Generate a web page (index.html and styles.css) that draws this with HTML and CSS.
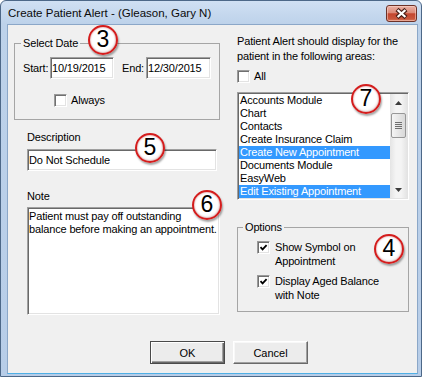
FILE: index.html
```html
<!DOCTYPE html>
<html lang="en">
<head>
    <meta charset="UTF-8">
    <meta name="viewport" content="width=device-width, initial-scale=1.0">
    <title>Create Patient Alert</title>
    <link rel="stylesheet" href="styles.css">
</head>
<body>
    <div class="window">
        <div class="titlebar">
            <span class="title">Create Patient Alert - (Gleason, Gary N)</span>
            <div class="close-btn">
                <svg width="31" height="17" viewBox="0 0 31 17">
                    <path d="M11 4.5 L20 12.5 M20 4.5 L11 12.5" stroke="#4b2019" stroke-width="4.4" fill="none"/>
                    <path d="M11.6 5 L19.4 12 M19.4 5 L11.6 12" stroke="#fff" stroke-width="2.2" fill="none"/>
                </svg>
            </div>
        </div>

        <div class="client">
            <div class="columns">
                <div class="left">
                    <fieldset class="group date-group">
                        <legend>Select Date</legend>
                        <div class="date-row">
                            <span class="start-label">Start:</span>
                            <div class="field date start">10/19/2015</div>
                            <span class="end-label">End:</span>
                            <div class="field date end">12/30/2015</div>
                        </div>
                        <div class="check always"><span class="box"></span>Always</div>
                    </fieldset>

                    <div class="caption desc-caption">Description</div>
                    <div class="field desc">Do Not Schedule</div>

                    <div class="caption note-caption">Note</div>
                    <div class="field note">Patient must pay off outstanding<br>balance before making an appointment.</div>
                </div>

                <div class="right">
                    <p class="intro">Patient Alert should display for the<br>patient in the following areas:</p>
                    <div class="check all"><span class="box"></span>All</div>

                    <div class="listbox">
                        <ul class="items">
                            <li>Accounts Module</li>
                            <li>Chart</li>
                            <li>Contacts</li>
                            <li>Create Insurance Claim</li>
                            <li class="selected">Create New Appointment</li>
                            <li>Documents Module</li>
                            <li>EasyWeb</li>
                            <li class="selected">Edit Existing Appointment</li>
                        </ul>
                        <div class="scrollbar">
                            <div class="arrow">
                                <svg width="7" height="4" viewBox="0 0 7 4"><path d="M3.5 0 L7 4 L0 4 Z" fill="#3c3c3c"/></svg>
                            </div>
                            <div class="track">
                                <div class="thumb">
                                    <span></span><span></span><span></span><span></span>
                                </div>
                            </div>
                            <div class="arrow">
                                <svg width="7" height="4" viewBox="0 0 7 4"><path d="M0 0 L7 0 L3.5 4 Z" fill="#3c3c3c"/></svg>
                            </div>
                        </div>
                    </div>

                    <fieldset class="group options">
                        <legend>Options</legend>
                        <div class="check opt">
                            <span class="box checked">
                                <svg width="9" height="9" viewBox="0 0 9 9"><path d="M1.5 4.2 L3.6 6.4 L7.6 2.2" stroke="#000" stroke-width="1.8" fill="none"/></svg>
                            </span>
                            <span>Show Symbol on<br>Appointment</span>
                        </div>
                        <div class="check opt second">
                            <span class="box checked">
                                <svg width="9" height="9" viewBox="0 0 9 9"><path d="M1.5 4.2 L3.6 6.4 L7.6 2.2" stroke="#000" stroke-width="1.8" fill="none"/></svg>
                            </span>
                            <span>Display Aged Balance<br>with Note</span>
                        </div>
                    </fieldset>
                </div>
            </div>

            <div class="buttons">
                <button class="btn default">OK</button>
                <button class="btn">Cancel</button>
            </div>

            <!-- numbered callouts laid over the dialog -->
            <span class="callout c3">3</span>
            <span class="callout c5">5</span>
            <span class="callout c6">6</span>
            <span class="callout c7">7</span>
            <span class="callout c4">4</span>
        </div>
    </div>
</body>
</html>
```

FILE: styles.css
```css
* {
    box-sizing: border-box;
}

body {
    margin: 0;
    background: #fff;
    font-family: "Liberation Sans", Arial, sans-serif;
    font-size: 11px;
    color: #000;
}

.window {
    position: relative;
    width: 422px;
    height: 377px;
    border: 1px solid #4d6888;
    border-radius: 6px 6px 0 0;
    background: linear-gradient(#d0e0f3, #bdd2ea 23px, #b7cde8);
    overflow: hidden;
}

.titlebar {
    height: 23px;
    padding: 1px 0 0 7px;
    line-height: 22px;
}

.title {
    font-size: 11.5px;
    color: #0b0b0b;
}

.close-btn {
    position: absolute;
    top: 4px;
    right: 4px;
    width: 31px;
    height: 17px;
    border: 1px solid #6d3228;
    border-radius: 3px;
    background: linear-gradient(#eab1a5, #dc8a78 45%, #c4462f 52%, #c9563c 85%, #d77a5e);
    box-shadow: inset 0 0 0 1px rgba(255, 220, 210, 0.5);
}

.close-btn svg {
    position: absolute;
    top: -1px;
    left: -1px;
}

.client {
    position: relative;
    margin-left: 6px;
    width: 411px;
    height: 350px;
    border: 1px solid #8ba7c8;
    border-bottom-color: #4fb0e6;
    background: #f0f0f0;
    letter-spacing: -0.15px;
}

.columns {
    display: grid;
    grid-template-columns: 206px 172px;
    column-gap: 17px;
    align-items: start;
    height: 291px;
    padding-left: 6px;
}

/* group boxes */
.group {
    margin: 0;
    min-width: 0;
    border: 1px solid #a5a5a5;
}

.group legend {
    padding: 0 2px;
    margin-left: -2px;
    line-height: 13px;
}

.date-group {
    margin-top: 12px;
    padding: 7px 8px 12px;
}

.date-row {
    display: flex;
    align-items: center;
    height: 22px;
}

.start-label {
    width: 27px;
}

.end-label {
    width: 24px;
    margin-left: 8px;
}

.field {
    background: #fff;
    border: 1px solid;
    border-color: #a0a0a0 #fff #fff #a0a0a0;
    box-shadow: inset 1px 1px 0 #696969, inset -1px -1px 0 #e3e3e3;
    padding: 0 1px;
    line-height: 20px;
    white-space: nowrap;
    overflow: hidden;
}

.date {
    height: 22px;
}

.date.start {
    width: 64px;
}

.date.end {
    width: 65px;
}

/* checkboxes */
.check {
    display: flex;
    align-items: center;
    height: 13px;
    line-height: 13px;
}

.box {
    position: relative;
    flex: none;
    width: 13px;
    height: 13px;
    margin-right: 4px;
    background: #fff;
    border: 1px solid;
    border-color: #9a9a9a #fff #fff #9a9a9a;
    box-shadow: inset 1px 1px 0 #707070, inset -1px -1px 0 #e3e3e3;
}

.box svg {
    position: absolute;
    top: 1px;
    left: 1px;
}

.always {
    margin-top: 15px;
    margin-left: 31px;
}

.caption {
    margin-left: 13px;
    line-height: 13px;
}

.desc-caption {
    margin-top: 11px;
}

.desc {
    margin: 5px 0 0 13px;
    width: 190px;
    height: 22px;
}

.note-caption {
    margin-top: 19px;
}

.note {
    margin: 4px 0 0 13px;
    width: 193px;
    height: 108px;
    padding-top: 2px;
    line-height: 13px;
}

/* right column */
.intro {
    margin: 9px 0 0;
    line-height: 15px;
}

.all {
    margin-top: 6px;
}

.listbox {
    display: flex;
    margin-top: 9px;
    width: 172px;
    height: 108px;
    background: #fff;
    border: 1px solid;
    border-color: #a0a0a0 #fff #fff #a0a0a0;
    box-shadow: inset 1px 1px 0 #696969, inset -1px -1px 0 #e3e3e3;
    padding: 1px;
}

.items {
    flex: 1;
    list-style: none;
    margin: 0;
    padding: 0;
}

.items li {
    line-height: 13px;
    padding-left: 1px;
    white-space: nowrap;
}

.items li.selected {
    background: #3399ff;
    color: #fff;
}

.scrollbar {
    display: flex;
    flex-direction: column;
    width: 17px;
    background: linear-gradient(90deg, #e4e4e4, #f4f4f4 35%, #f4f4f4 65%, #e4e4e4);
}

.arrow {
    display: flex;
    align-items: center;
    justify-content: center;
    height: 17px;
}

.track {
    flex: 1;
    padding: 2px 1px 0;
}

.thumb {
    display: flex;
    flex-direction: column;
    align-items: center;
    justify-content: center;
    gap: 1px;
    height: 25px;
    border: 1px solid #979797;
    border-radius: 2px;
    background: linear-gradient(90deg, #f5f5f5, #e6e6e6 50%, #d9d9d9);
}

.thumb span {
    width: 7px;
    height: 1px;
    background: #6f6f6f;
}

.options {
    margin-top: 21px;
    padding: 6px 7px 9px;
}

.opt {
    align-items: flex-start;
    height: auto;
    margin-left: 12px;
    line-height: 14px;
}

.opt .box {
    margin-top: 1px;
    margin-right: 5px;
}

.opt.second {
    margin-top: 6px;
}

/* dialog buttons */
.buttons {
    display: flex;
    gap: 8px;
    margin-top: 25px;
    padding-left: 142px;
}

.btn {
    width: 75px;
    height: 23px;
    padding: 0;
    font: inherit;
    color: #000;
    background: #ececec;
    border: 1px solid;
    border-color: #fff #696969 #696969 #fff;
    box-shadow: inset -1px -1px 0 #a0a0a0, inset 1px 1px 0 #f8f8f8;
}

.btn.default {
    border: 1px solid #4a4a4a;
    box-shadow: inset 1px 1px 0 #fff, inset -1px -1px 0 #696969, inset -2px -2px 0 #a0a0a0;
}

/* numbered callouts */
.callout {
    position: absolute;
    width: 30px;
    height: 30px;
    border-radius: 50%;
    border: 2.5px solid #d41d1d;
    background: radial-gradient(circle at 45% 40%, #fff 55%, #e4e4e4 100%);
    box-shadow: 1px 2px 2px rgba(0, 0, 0, 0.35), inset 0 0 2px rgba(160, 0, 0, 0.6);
    font-size: 23px;
    line-height: 25px;
    text-align: center;
    letter-spacing: 0;
}

.c3 {
    left: 80px;
    top: 0;
}

.c5 {
    left: 127px;
    top: 108px;
}

.c6 {
    left: 184px;
    top: 165px;
}

.c7 {
    left: 343px;
    top: 59px;
}

.c4 {
    left: 366px;
    top: 209px;
}
```
